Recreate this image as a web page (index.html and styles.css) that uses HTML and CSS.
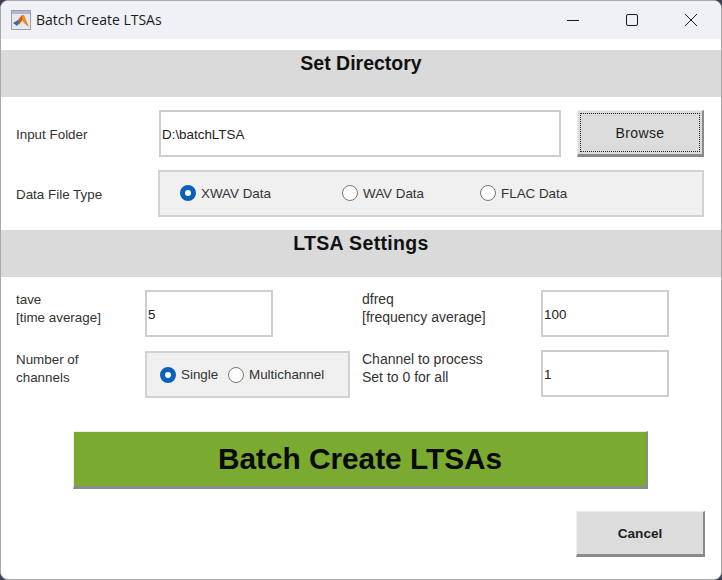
FILE: index.html
```html
<!DOCTYPE html>
<html lang="en">
<head>
  <meta charset="UTF-8">
  <title>Batch Create LTSAs</title>
  <link rel="stylesheet" href="styles.css">
</head>
<body>
  <div class="window">
    <div class="titlebar">
      <svg class="app-icon" width="20" height="20" viewBox="0 0 20 20">
        <rect x="0.5" y="0.5" width="19" height="19" fill="#e6e8ec" stroke="#9aa0a8"/>
        <rect x="1" y="1" width="18" height="3" fill="#a9b8cc"/>
        <path d="M2 13 L7 10 L9 12 L6 16 Z" fill="#2f6fb5"/>
        <path d="M7 10 L11 5 L12 9 L8 15 Z" fill="#d9531e"/>
        <path d="M11 5 L13 5 L18 17 L14 14 L11 10 Z" fill="#f08a1d"/>
      </svg>
      <span class="title-text">Batch Create LTSAs</span>
      <div class="win-controls">
        <svg width="12" height="12" viewBox="0 0 12 12"><path d="M0 6.5 H12" stroke="#1a1a1a" fill="none"/></svg>
        <svg width="12" height="12" viewBox="0 0 12 12"><rect x="0.5" y="0.5" width="11" height="11" rx="1.5" stroke="#1a1a1a" fill="none"/></svg>
        <svg width="12" height="12" viewBox="0 0 12 12"><path d="M0 0 L12 12 M12 0 L0 12" stroke="#1a1a1a" fill="none"/></svg>
      </div>
    </div>

    <div class="band band-first">Set Directory</div>

    <div class="row row-folder">
      <div class="label label-folder">Input Folder</div>
      <div class="field field-folder">D:\batchLTSA</div>
      <div class="btn btn-browse"><span class="focus-ring">Browse</span></div>
    </div>

    <div class="row row-type">
      <div class="label label-folder">Data File Type</div>
      <div class="group group-type">
        <span class="radio-item item-xwav"><span class="radio on"></span>XWAV Data</span>
        <span class="radio-item item-wav"><span class="radio"></span>WAV Data</span>
        <span class="radio-item"><span class="radio"></span>FLAC Data</span>
      </div>
    </div>

    <div class="band band-second">LTSA Settings</div>

    <div class="settings">
      <div class="label label-left">tave<br>[time average]</div>
      <div class="field field-num">5</div>
      <div class="label label-right">dfreq<br>[frequency average]</div>
      <div class="field field-num">100</div>

      <div class="label label-left">Number of<br>channels</div>
      <div class="group group-channels">
        <span class="radio-item item-single"><span class="radio on"></span>Single</span>
        <span class="radio-item item-multi"><span class="radio"></span>Multichannel</span>
      </div>
      <div class="label label-right">Channel to process<br>Set to 0 for all</div>
      <div class="field field-num">1</div>
    </div>

    <div class="btn btn-run">Batch Create LTSAs</div>

    <div class="footer">
      <div class="btn btn-cancel">Cancel</div>
    </div>
  </div>
</body>
</html>
```

FILE: styles.css
```css
html, body {
  margin: 0;
  padding: 0;
  height: 100%;
}
body {
  background-color: #3a3f55;
  font-family: "Liberation Sans", Arial, sans-serif;
  font-size: 13.4px;
  color: #222;
  overflow: hidden;
}
.window {
  box-sizing: border-box;
  width: 722px;
  height: 580px;
  background-color: #fff;
  border: 1px solid #a8a8a8;
  border-radius: 8px;
  overflow: hidden;
}
.titlebar {
  display: flex;
  align-items: center;
  height: 38px;
  background-color: #eff1f7;
  padding-left: 10px;
}
.app-icon {
  margin-right: 5px;
}
.title-text {
  font-family: "Open Sans", "Noto Sans", sans-serif;
  font-size: 14px;
  color: #1a1a1a;
  padding-bottom: 2px;
}
.win-controls {
  margin-left: auto;
  display: flex;
  gap: 47px;
  padding-right: 24px;
}
.band {
  background-color: #dadada;
  height: 47px;
  text-align: center;
  font-size: 19.5px;
  font-weight: bold;
  line-height: 26px;
  color: #111;
}
.band-first {
  margin-top: 11px;
}
.band-second {
  margin-top: 13px;
  letter-spacing: 0.35px;
}
.row {
  display: flex;
  align-items: center;
  padding-left: 15px;
}
.row-folder {
  margin-top: 13px;
}
.row-type {
  margin-top: 13px;
}
.label {
  line-height: 18px;
  color: #333;
}
.label-folder {
  width: 143px;
  padding-top: 2px;
}
.field {
  box-sizing: border-box;
  border: 2px solid #cdcdd4;
  background-color: #fff;
  display: flex;
  align-items: center;
  padding: 1px 0 0 1px;
  color: #222;
}
.field-folder {
  width: 402px;
  height: 47px;
}
.btn {
  box-sizing: border-box;
  background-color: #dcdcdc;
  border-style: solid;
  border-width: 1px 2px 3px 1px;
  border-color: #ececec #8a8a8a #8a8a8a #ececec;
  display: flex;
  align-items: center;
  justify-content: center;
  font-weight: bold;
  color: #1c1c1c;
}
.btn-browse {
  width: 127px;
  height: 47px;
  margin-left: 16px;
  padding: 2px;
  font-weight: normal;
  font-size: 14px;
  letter-spacing: 0.4px;
}
.focus-ring {
  flex: 1;
  align-self: stretch;
  display: flex;
  align-items: center;
  justify-content: center;
  border: 1px dotted #222;
  padding-top: 1px;
}
.group {
  box-sizing: border-box;
  display: flex;
  align-items: center;
  background-color: #f0f0f0;
  border: 2px solid #d2d2d2;
  height: 47px;
}
.group-type {
  width: 546px;
  margin-left: -1px;
  padding: 0 0 1px 20px;
}
.group-channels {
  width: 205px;
  align-self: start;
  margin-top: 1px;
  padding-left: 13px;
}
.radio-item {
  display: inline-flex;
  align-items: center;
  color: #333;
}
.radio {
  box-sizing: border-box;
  width: 16px;
  height: 16px;
  border-radius: 50%;
  border: 1.5px solid #777;
  background-color: #fff;
  margin-right: 5px;
}
.radio.on {
  border: 5px solid #0a62b8;
}
.item-xwav {
  width: 162px;
}
.item-wav {
  width: 138px;
}
.item-single {
  width: 68px;
}
.settings {
  display: grid;
  grid-template-columns: 129px 128px 268px 128px;
  grid-template-rows: 47px 47px;
  row-gap: 13px;
  align-items: center;
  padding-left: 15px;
  margin-top: 13px;
}
.label-left {
  align-self: start;
  padding-top: 1px;
}
.label-right {
  align-self: start;
  padding-left: 89px;
  font-size: 14px;
}
.field-num {
  height: 47px;
  width: 128px;
}
.btn-run {
  width: 575px;
  height: 58px;
  margin: 34px 0 0 72px;
  background-color: #7aaa2f;
  font-size: 29.8px;
  color: #0a0a0a;
}
.footer {
  display: flex;
  justify-content: flex-end;
  margin-top: 22px;
  padding-right: 16px;
}
.btn-cancel {
  width: 129px;
  height: 46px;
  padding-top: 1px;
  font-size: 13.6px;
}
```
